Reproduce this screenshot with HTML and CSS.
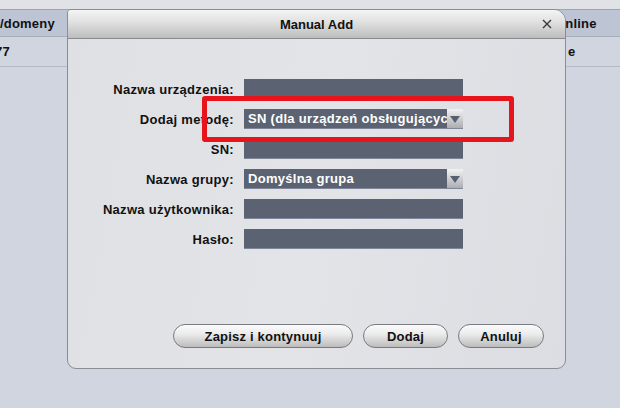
FILE: index.html
```html
<!DOCTYPE html>
<html lang="pl">
<head>
<meta charset="utf-8">
<link rel="stylesheet" href="styles.css">
</head>
<body>
<div class="topbar"></div>
<div class="table">
  <div class="row head">
    <div class="cell c1">/domeny</div>
    <div class="cell c2"></div>
    <div class="cell c3">Online</div>
  </div>
  <div class="row body-row">
    <div class="cell c1 num">77</div>
    <div class="cell c2"></div>
    <div class="cell c3 st">e</div>
  </div>
</div>

<div class="dialog">
  <div class="titlebar">
    <span class="title">Manual Add</span>
    <svg class="close" width="10" height="10" viewBox="0 0 10 10"><path d="M1 1 L9 9 M9 1 L1 9" stroke="#3a3a3a" stroke-width="1.4" fill="none"/></svg>
  </div>
  <div class="content">
    <div class="form">
      <label class="lbl">Nazwa urządzenia:</label>
      <div class="field"></div>
      <label class="lbl">Dodaj metodę:</label>
      <div class="field select"><span class="val">SN (dla urządzeń obsługujących SN)</span><span class="arrow"></span></div>
      <label class="lbl">SN:</label>
      <div class="field"></div>
      <label class="lbl">Nazwa grupy:</label>
      <div class="field select"><span class="val">Domyślna grupa</span><span class="arrow"></span></div>
      <label class="lbl">Nazwa użytkownika:</label>
      <div class="field"></div>
      <label class="lbl">Hasło:</label>
      <div class="field"></div>
    </div>
    <div class="buttons">
      <button class="btn b-save">Zapisz i kontynuuj</button>
      <button class="btn b-add">Dodaj</button>
      <button class="btn b-cancel">Anuluj</button>
    </div>
  </div>
</div>

<div class="highlight"></div>
</body>
</html>
```

FILE: styles.css
```css
html, body {
  margin: 0;
  padding: 0;
}
body {
  width: 620px;
  height: 408px;
  overflow: hidden;
  position: relative;
  background: #d0d5e0;
  font-family: "Liberation Sans", Arial, sans-serif;
  font-weight: bold;
  font-size: 13px;
  color: #111;
}
.topbar {
  height: 9px;
  background: #e1e2e6;
}
.table {
  display: flex;
  flex-direction: column;
}
.row {
  display: grid;
  grid-template-columns: 66px 500px 54px;
}
.head {
  height: 26px;
  background: #bdc5d4;
  border-top: 1px solid #9ea4b0;
  border-bottom: 1px solid #a6aebc;
}
.body-row {
  height: 29px;
  background: #d0d5e0;
  border-bottom: 1px solid #b3bac8;
}
.cell {
  display: flex;
  align-items: center;
  overflow: hidden;
  white-space: nowrap;
  letter-spacing: 0.2px;
}
.c1 {
  padding-left: 0;
}
.num {
  padding-left: 0;
  text-indent: -5px;
}
.c3 {
  margin-left: -11px;
}
.st {
  margin-left: 0;
  padding-left: 2px;
}

.dialog {
  position: absolute;
  left: 67px;
  top: 9px;
  width: 497px;
  height: 358px;
  border: 1px solid #8c8d93;
  border-radius: 4px 12px 9px 9px;
  background: linear-gradient(100deg, #dfe0e4 0%, #e3e4e8 50%, #dcdde2 100%);
  display: flex;
  flex-direction: column;
  overflow: hidden;
}
.titlebar {
  height: 28px;
  border-bottom: 1px solid #8a8b90;
  background: linear-gradient(#f4f4f4 0%, #e2e2e2 40%, #bdbdbd 100%);
  display: flex;
  align-items: center;
  justify-content: center;
  position: relative;
  flex-shrink: 0;
}
.title {
  font-size: 13px;
  color: #111;
}
.close {
  position: absolute;
  right: 13px;
  top: 9px;
}
.content {
  flex: 1;
  display: flex;
  flex-direction: column;
  padding: 40px 21px 20px 0;
}
.form {
  display: grid;
  grid-template-columns: 166px 219px;
  column-gap: 10px;
  row-gap: 10px;
  grid-auto-rows: 20px;
}
.lbl {
  display: flex;
  align-items: center;
  justify-content: flex-end;
  color: #111;
  white-space: nowrap;
  letter-spacing: 0.3px;
}
.field {
  background: #5b6272;
  border-bottom: 1px solid #80879a;
  box-sizing: border-box;
  display: flex;
  align-items: center;
  overflow: hidden;
  color: #fff;
  letter-spacing: 0.3px;
}
.select .val {
  flex: 1;
  padding-left: 4px;
  white-space: nowrap;
  overflow: hidden;
}
.arrow {
  width: 16px;
  height: 20px;
  flex-shrink: 0;
  background: linear-gradient(#f2f2f2, #a9aaae);
  position: relative;
}
.arrow::after {
  content: "";
  position: absolute;
  left: 3px;
  top: 7px;
  border-left: 5px solid transparent;
  border-right: 5px solid transparent;
  border-top: 7px solid #566070;
}
.buttons {
  margin-top: auto;
  display: flex;
  justify-content: flex-end;
  gap: 10px;
}
.btn {
  height: 24px;
  border: 1px solid #7a7b80;
  border-radius: 12px;
  background: linear-gradient(#fbfbfb 0%, #ececec 40%, #bcbcbc 100%);
  font-family: "Liberation Sans", Arial, sans-serif;
  font-weight: bold;
  font-size: 13px;
  color: #111;
  padding: 0;
  letter-spacing: 0.2px;
}
.b-save { width: 180px; }
.b-add { width: 85px; }
.b-cancel { width: 86px; }

.highlight {
  position: absolute;
  left: 202px;
  top: 96px;
  width: 302px;
  height: 36px;
  border: 5px solid #e8141b;
  border-radius: 3px;
}
```
